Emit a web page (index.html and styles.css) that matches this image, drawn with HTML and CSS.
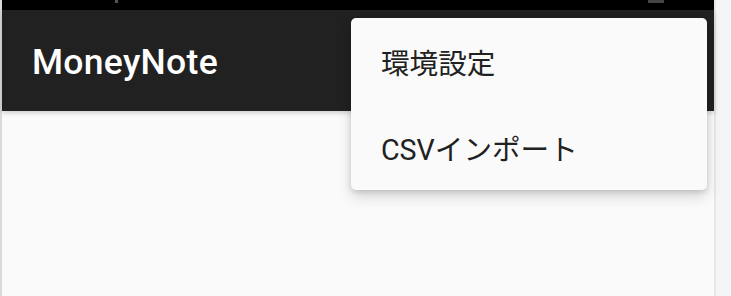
FILE: index.html
```html
<!DOCTYPE html>
<html lang="ja">
<head>
<meta charset="utf-8">
<link rel="stylesheet" href="styles.css">
</head>
<body>
<div class="screen">
  <div class="edge-left"></div>
  <div class="app">
    <div class="statusbar">
      <span class="sb-dot sb-left"></span>
      <span class="sb-dot sb-right"></span>
    </div>
    <header class="toolbar">
      <h1 class="title">MoneyNote</h1>
    </header>
    <main class="content"></main>
    <div class="menu">
      <div class="menu-item">環境設定</div>
      <div class="menu-item">CSVインポート</div>
    </div>
  </div>
  <div class="edge-right"></div>
</div>
</body>
</html>
```
FILE: styles.css
```css
html, body {
  margin: 0;
  padding: 0;
  height: 100%;
  overflow: hidden;
}
body {
  font-family: Roboto, "Noto Sans CJK JP", sans-serif;
  background: #f4f5f7;
}
.screen {
  display: flex;
  height: 296px;
}
.edge-left {
  width: 2px;
  background: #d9d9d9;
}
.app {
  position: relative;
  width: 712px;
  display: flex;
  flex-direction: column;
  background: #fafafa;
}
.edge-right {
  flex: 1;
  background: #f4f5f7;
  border-left: 2px solid #e6e7e9;
}
.statusbar {
  height: 10px;
  background: #000;
  position: relative;
}
.sb-dot {
  position: absolute;
  top: 0;
  height: 3px;
  background: #555;
}
.sb-left { left: 113px; width: 3px; }
.sb-right { left: 646px; width: 16px; background: #444; }
.toolbar {
  height: 101px;
  background: #212121;
  display: flex;
  align-items: center;
  padding-left: 30px;
  box-shadow: 0 2px 5px rgba(0,0,0,0.18);
  position: relative;
  z-index: 1;
}
.title {
  margin: 0;
  color: #fff;
  font-family: Roboto, sans-serif;
  font-weight: 500;
  font-size: 35.5px;
  letter-spacing: 0.3px;
  padding-top: 3px;
}
.content {
  flex: 1;
  background: #fafafa;
}
.menu {
  position: absolute;
  top: 18px;
  left: 349px;
  width: 356px;
  background: #fafafa;
  border-radius: 5px;
  box-shadow: 0 6px 14px rgba(0,0,0,0.16), 0 2px 5px rgba(0,0,0,0.12);
  z-index: 2;
  display: flex;
  flex-direction: column;
}
.menu-item {
  height: 86px;
  display: flex;
  align-items: center;
  padding-left: 30px;
  font-family: Roboto, "Noto Sans CJK JP", sans-serif;
  font-size: 28.6px;
  color: #212121;
}
```
